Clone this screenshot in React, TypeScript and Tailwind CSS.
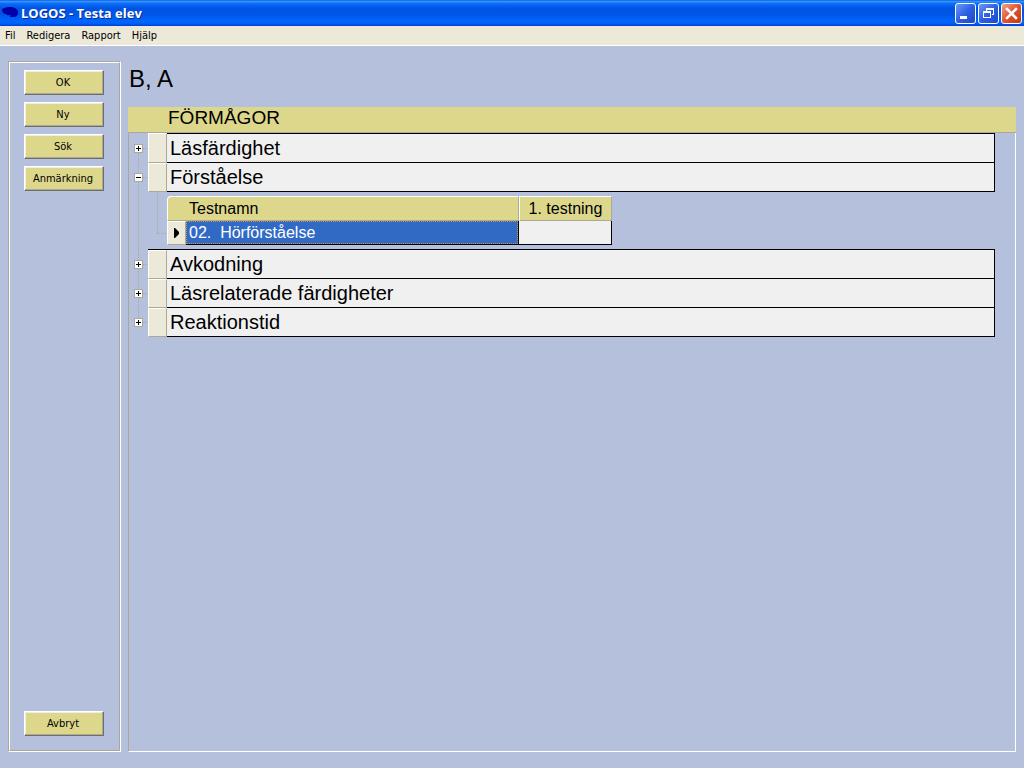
import { useState } from "react";

type Test = { name: string; result: string };
type Ability = { name: string; tests?: Test[] };

const menus = ["Fil", "Redigera", "Rapport", "Hjälp"];
const actions = ["OK", "Ny", "Sök", "Anmärkning"];

const abilities: Ability[] = [
  { name: "Läsfärdighet" },
  { name: "Förståelse", tests: [{ name: "02.  Hörförståelse", result: "" }] },
  { name: "Avkodning" },
  { name: "Läsrelaterade färdigheter" },
  { name: "Reaktionstid" },
];

const dotsDown = "bg-[repeating-linear-gradient(to_bottom,#aca899_0_1px,transparent_1px_2px)]";
const dotsRight = "bg-[repeating-linear-gradient(to_right,#aca899_0_1px,transparent_1px_2px)]";

function TitleBar() {
  const button = "h-[21px] w-[21px] overflow-hidden rounded-[3px] border border-white";
  return (
    <header className="flex h-[26px] items-center justify-between bg-[linear-gradient(to_bottom,#0a5fe0_0%,#3593ff_6%,#0a6cf8_14%,#0054e3_32%,#0055e5_55%,#0066ff_82%,#0061f5_90%,#003dd7_100%)] px-[2px]">
      <div className="flex items-center gap-[3px]">
        <svg width="16" height="16" viewBox="0 0 16 16" aria-hidden="true">
          <path
            d="M0 5C0 3.500 2 3 3 3c1.500-1 3-1 5-1 4 0 8 1.500 8 5.500 0 3-2 4.500-4 4.500H8v-1h1l-1-1c-1.500.7-3.500 0-4-1H2V8H1V6.500H0z"
            fill="#0000a8"
          />
        </svg>
        <h1 className="font-['Open_Sans','Noto_Sans',sans-serif] text-[13px] font-bold leading-4 text-white [text-shadow:1px_1px_0_#0a2a94]">
          LOGOS - Testa elev
        </h1>
      </div>
      <div className="flex gap-[2px]">
        <button aria-label="Minimera" className={`${button} bg-linear-to-br from-[#6f97f0] via-[#2c61e4] to-[#1c49c8]`}>
          <svg width="19" height="19" viewBox="0 0 19 19">
            <path d="M4 12h7v3H4z" fill="#fff" />
          </svg>
        </button>
        <button aria-label="Återställ" className={`${button} bg-linear-to-br from-[#6f97f0] via-[#2c61e4] to-[#1c49c8]`}>
          <svg width="19" height="19" viewBox="0 0 19 19" fill="#fff">
            <path d="M7 4h8v7h-2v-1h1V6H8v1H7z" />
            <path fillRule="evenodd" d="M4 7h8v7H4zM5 9v4h6V9z" />
          </svg>
        </button>
        <button aria-label="Stäng" className={`${button} bg-linear-to-br from-[#f0a08a] via-[#e0532f] to-[#c03a14]`}>
          <svg width="19" height="19" viewBox="0 0 19 19">
            <path d="M5 5l9 9M14 5l-9 9" stroke="#fff" strokeWidth="2.5" strokeLinecap="square" />
          </svg>
        </button>
      </div>
    </header>
  );
}

function PushButton({ label }: { label: string }) {
  return (
    <button className="h-[25px] w-full border border-b-[#716f64] border-l-white border-r-[#716f64] border-t-white bg-[#ddd78c] pr-[2px] text-[11px] leading-[17px] shadow-[inset_-1px_-1px_0_#aca899,inset_1px_1px_0_#f1efe2]">
      {label}
    </button>
  );
}

type ToggleProps = {
  open: boolean;
  first: boolean;
  last: boolean;
  topBorder: boolean;
  label: string;
  onClick: () => void;
};

function Toggle({ open, first, last, topBorder, label, onClick }: ToggleProps) {
  return (
    <div
      className={`grid w-[19px] shrink-0 grid-cols-[5px_9px_5px] ${topBorder ? "grid-rows-[11px_9px_1fr]" : "grid-rows-[10px_9px_1fr]"}`}
    >
      <div />
      <div className={`ml-1 w-px ${first ? "" : dotsDown}`} />
      <div />
      <div />
      <button
        aria-label={label}
        aria-expanded={open}
        onClick={onClick}
        className="flex h-[9px] w-[9px] items-center justify-center border border-[#aca899] bg-white"
      >
        <svg width="7" height="7" viewBox="0 0 7 7" className="shrink-0">
          <path d={open ? "M1 3h5v1H1z" : "M1 3h5v1H1zM3 1h1v5H3z"} fill="#000" />
        </svg>
      </button>
      <div className={`mt-1 h-px ${dotsRight}`} />
      <div />
      {!last && <div className={`ml-1 w-px ${dotsDown}`} />}
    </div>
  );
}

function TestTable({ tests }: { tests: Test[] }) {
  return (
    <div className="flex pb-1 pt-1">
      {/* Branch from the ability row to its tests */}
      <div className="-mt-1 ml-[9px] w-[10px] shrink-0">
        <div className={`h-[41px] w-px ${dotsDown}`} />
        <div className={`h-px w-[9px] ${dotsRight}`} />
      </div>
      <table className="w-[445px] table-fixed border-separate border-spacing-0 text-[16px] leading-5">
        <colgroup>
          <col className="w-[19px]" />
          <col className="w-[333px]" />
          <col className="w-[93px]" />
        </colgroup>
        <thead>
          <tr className="h-[25px]">
            <th
              colSpan={2}
              className="rounded-tl-[4px] border border-b-[#aca899] border-l-white border-r-[#aca899] border-t-white bg-[#ddd78c] p-0 pl-[21px] text-left font-normal"
            >
              Testnamn
            </th>
            <th className="border border-b-[#aca899] border-l-white border-r-[#aca899] border-t-white bg-[#ddd78c] p-0 font-normal">
              1. testning
            </th>
          </tr>
        </thead>
        <tbody>
          {tests.map((test) => (
            <tr key={test.name} className="h-[24px]">
              <td className="border border-b-[#aca899] border-l-white border-r-[#aca899] border-t-white bg-[#ece9d8] p-0">
                <svg width="17" height="22" viewBox="0 0 17 22" className="block">
                  <path d="M6 6h1l4 4v2l-4 4H6z" fill="#000" />
                </svg>
              </td>
              <td className="border-b border-r border-black bg-[#316ac5] p-0 text-white">
                <div className="h-[23px] whitespace-pre border border-dotted border-[#ce953a] pl-[2px] leading-[22px]">
                  {test.name}
                </div>
              </td>
              <td className="border-b border-r border-black bg-[#f0f0f0] p-0">{test.result}</td>
            </tr>
          ))}
        </tbody>
      </table>
    </div>
  );
}

export default function App() {
  const [open, setOpen] = useState("Förståelse");

  return (
    <div className="flex min-h-screen flex-col bg-[#b5c1dc] font-['Liberation_Sans',Arial,sans-serif] text-black">
      <TitleBar />
      <nav className="flex h-5 items-center gap-[11px] border-b border-white bg-[#ece9d8] pl-[5px] font-['DejaVu_Sans_Condensed','Noto_Sans',sans-serif] text-[11px] leading-4">
        {menus.map((menu) => (
          <button key={menu}>{menu}</button>
        ))}
      </nav>

      <div className="flex flex-1 gap-[7px] px-2 pb-4 pt-[15px]">
        {/* Action buttons */}
        <aside className="flex w-[113px] shrink-0 border border-b-white border-l-[#aca899] border-r-white border-t-[#aca899]">
          <div className="flex flex-1 flex-col gap-[7px] border border-b-[#aca899] border-l-white border-r-[#aca899] border-t-white pb-[14px] pl-[14px] pr-[15px] pt-[7px] font-['DejaVu_Sans_Condensed','Noto_Sans',sans-serif]">
            {actions.map((action) => (
              <PushButton key={action} label={action} />
            ))}
            <div className="mt-auto">
              <PushButton label="Avbryt" />
            </div>
          </div>
        </aside>

        <main className="flex flex-1 flex-col">
          <h2 className="h-[46px] pl-px pt-[2px] text-[24px] leading-8">B, A</h2>
          <div className="h-[26px] border-b border-[#aca899] bg-[#ddd78c] pl-10 text-[19px] leading-[22px]">FÖRMÅGOR</div>

          {/* Ability tree */}
          <div className="flex-1 border-b border-l border-r border-b-white border-l-[#aca899] border-r-white pr-5">
            {abilities.map((ability, i) => {
              const expanded = open === ability.name;
              const first = i === 0;
              const afterTests = !first && open === abilities[i - 1].name && !!abilities[i - 1].tests;
              return (
                <div key={ability.name} className="flex">
                  <Toggle
                    label={ability.name}
                    open={expanded}
                    first={first}
                    last={i === abilities.length - 1}
                    topBorder={first || afterTests}
                    onClick={() => setOpen(expanded ? "" : ability.name)}
                  />
                  <div className="flex-1">
                    <div className={`flex ${afterTests ? "border-t border-black" : ""}`}>
                      <div className="w-[19px] shrink-0 border border-b-[#aca899] border-l-white border-r-[#aca899] border-t-white bg-[#ece9d8]" />
                      <div
                        className={`flex-1 border-b border-r border-black bg-[#f0f0f0] pl-[3px] text-[20px] leading-7 ${first ? "border-t" : ""}`}
                      >
                        {ability.name}
                      </div>
                    </div>
                    {expanded && ability.tests && <TestTable tests={ability.tests} />}
                  </div>
                </div>
              );
            })}
          </div>
        </main>
      </div>
    </div>
  );
}
